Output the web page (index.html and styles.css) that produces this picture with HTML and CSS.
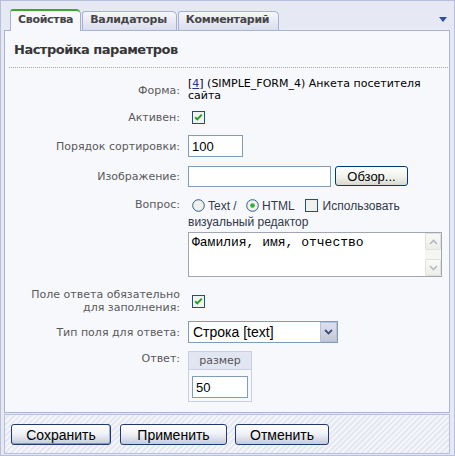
FILE: index.html
```html
<!DOCTYPE html>
<html lang="ru">
<head>
<meta charset="utf-8">
<title>Настройка параметров</title>
<link rel="stylesheet" href="styles.css">
</head>
<body>
<div class="window">
  <div class="tabbar">
    <div class="tabs">
      <div class="tab tab-active">Свойства</div>
      <div class="tab">Валидаторы</div>
      <div class="tab">Комментарий</div>
    </div>
    <span class="menu-arrow"></span>
  </div>

  <div class="panel">
    <h2 class="title">Настройка параметров</h2>
    <div class="form">
      <div class="row row-middle">
        <div class="label">Форма:</div>
        <div class="value value-text">[<a href="#" class="link">4</a>] (SIMPLE_FORM_4) Анкета посетителя сайта</div>
      </div>

      <div class="row row-middle mt-9">
        <div class="label">Активен:</div>
        <div class="value">
          <svg class="check" width="13" height="13" viewBox="0 0 13 13"><rect x="0.5" y="0.5" width="12" height="12" fill="#f3f3ef" stroke="#1c5180"/><path d="M3.2 6.2 L5.3 8.4 L9.8 3.6" stroke="#21a121" stroke-width="2" fill="none"/></svg>
        </div>
      </div>

      <div class="row row-middle mt-11">
        <div class="label">Порядок сортировки:</div>
        <div class="value"><input class="field field-sort" type="text" value="100"></div>
      </div>

      <div class="row row-middle mt-9">
        <div class="label">Изображение:</div>
        <div class="value value-file">
          <input class="field field-file" type="text" value="">
          <button class="browse" type="button">Обзор...</button>
        </div>
      </div>

      <div class="row mt-11">
        <div class="label">Вопрос:</div>
        <div class="value">
          <div class="options">
            <svg class="radio" width="13" height="13" viewBox="0 0 13 13"><circle cx="6.5" cy="6.5" r="5.8" fill="#f1f1ec" stroke="#2c5a8c"/></svg><span class="opt-text">Text /</span>
            <svg class="radio radio-2" width="13" height="13" viewBox="0 0 13 13"><circle cx="6.5" cy="6.5" r="5.8" fill="#f1f1ec" stroke="#2c5a8c"/><circle cx="6.5" cy="6.5" r="2.3" fill="#2fae2f"/></svg><span class="opt-text">HTML</span>
            <svg class="check check-inline" width="13" height="13" viewBox="0 0 13 13"><rect x="0.5" y="0.5" width="12" height="12" fill="#f1f1ec" stroke="#1c5180"/></svg><span class="opt-text">Использовать визуальный редактор</span>
          </div>
          <div class="textarea">
            <textarea class="textarea-input">Фамилия, имя, отчество</textarea>
            <div class="scrollbar">
              <span class="sb-btn"><svg width="9" height="6" viewBox="0 0 9 6"><path d="M1 5 L4.5 1.5 L8 5" stroke="#b4b9c6" stroke-width="1.6" fill="none"/></svg></span>
              <span class="sb-btn"><svg width="9" height="6" viewBox="0 0 9 6"><path d="M1 1 L4.5 4.5 L8 1" stroke="#b4b9c6" stroke-width="1.6" fill="none"/></svg></span>
            </div>
          </div>
        </div>
      </div>

      <div class="row row-middle mt-11">
        <div class="label">Поле ответа обязательно<br>для заполнения:</div>
        <div class="value">
          <svg class="check" width="13" height="13" viewBox="0 0 13 13"><rect x="0.5" y="0.5" width="12" height="12" fill="#f3f3ef" stroke="#1c5180"/><path d="M3.2 6.2 L5.3 8.4 L9.8 3.6" stroke="#21a121" stroke-width="2" fill="none"/></svg>
        </div>
      </div>

      <div class="row row-middle mt-7">
        <div class="label">Тип поля для ответа:</div>
        <div class="value">
          <div class="select">
            <span class="select-value">Строка [text]</span>
            <span class="select-btn"><svg width="9" height="6" viewBox="0 0 9 6"><path d="M1 1 L4.5 4.5 L8 1" stroke="#3f506f" stroke-width="1.8" fill="none"/></svg></span>
          </div>
        </div>
      </div>

      <div class="row mt-8">
        <div class="label label-top">Ответ:</div>
        <div class="value">
          <table class="size-table">
            <tr><th>размер</th></tr>
            <tr><td><input class="field field-size" type="text" value="50"></td></tr>
          </table>
        </div>
      </div>
    </div>
  </div>

  <div class="buttons">
    <button class="btn btn-default btn-save" type="button">Сохранить</button>
    <button class="btn btn-apply" type="button">Применить</button>
    <button class="btn btn-cancel" type="button">Отменить</button>
  </div>
</div>
</body>
</html>
```

FILE: styles.css
```css
* { box-sizing: border-box; }

html, body {
  margin: 0;
  padding: 0;
  background: #ffffff;
}

body {
  font-family: "DejaVu Sans", Verdana, sans-serif;
  font-size: 11px;
  color: #000;
}

.window {
  width: 455px;
  height: 456px;
  border: 1px solid #b7bfdb;
  background: #e6e8f3;
  padding: 0 4px 3px 3px;
}

/* tabs */
.tabbar {
  height: 29px;
  display: flex;
  justify-content: space-between;
  position: relative;
  z-index: 1;
}

.tabs {
  display: flex;
  align-items: flex-end;
  gap: 1px;
  padding-left: 6px;
}

.tab {
  height: 19px;
  padding: 1px 9px 0 7px;
  border: 1px solid #a6b0d2;
  border-bottom: none;
  border-radius: 3px 5px 0 0;
  background: linear-gradient(#f6f7fb, #dadded);
  font-weight: bold;
  font-size: 11px;
  line-height: 13px;
  letter-spacing: -0.3px;
  color: #454545;
  white-space: nowrap;
}

.tab-active {
  height: 22px;
  margin-bottom: -1px;
  padding-top: 2px;
  padding-right: 7px;
  border-top: 2px solid #3aaa2a;
  background: #f7f8fc;
}

.menu-arrow {
  margin-top: 16px;
  margin-right: 3px;
  width: 0;
  height: 0;
  border-top: 5px solid #2d4f9e;
  border-left: 4px solid transparent;
  border-right: 4px solid transparent;
}

/* panel */
.panel {
  border: 1px solid #a9b4d5;
  background: #f7f8fc;
  padding: 0 6px 10px 0;
}

.title {
  margin: 11px -5px 0 4px;
  padding: 0 0 9px 5px;
  font-size: 13px;
  line-height: 16px;
  font-weight: bold;
  letter-spacing: -0.5px;
  color: #363636;
  border-bottom: 1px dotted #a8a8a8;
}

.form {
  margin-top: 10px;
}

.row {
  display: grid;
  grid-template-columns: 175px 1fr;
  column-gap: 8px;
  align-items: start;
}

.row-middle { align-items: center; }

.mt-7 { margin-top: 7px; }
.mt-8 { margin-top: 8px; }
.mt-9 { margin-top: 9px; }
.mt-11 { margin-top: 11px; }

.label {
  text-align: right;
  color: #5a5a5a;
  line-height: 13px;
}

.label-top { padding-top: 1px; }

.value-text {
  line-height: 12px;
  color: #000;
}

.link {
  color: #23349a;
  text-decoration: underline;
}

.value { min-width: 0; }

.check {
  display: block;
  margin-left: 4px;
}

.field {
  display: block;
  height: 22px;
  border: 1px solid #7f9db9;
  background: #fff;
  padding: 0 3px;
  font-family: "Liberation Sans", Arial, sans-serif;
  font-size: 13px;
  color: #000;
  outline: none;
}

.field-sort { width: 55px; }

.value-file {
  display: flex;
  align-items: flex-start;
  gap: 4px;
}

.field-file {
  width: 143px;
  height: 21px;
}

.browse {
  width: 73px;
  height: 20px;
  border: 1px solid #003c74;
  border-radius: 3px;
  background: linear-gradient(#ffffff, #f0f0ea 60%, #d8d8d0);
  font-family: "Liberation Sans", Arial, sans-serif;
  font-size: 13px;
  color: #000;
  padding: 0;
  line-height: 17px;
}

/* question options */
.options {
  font-family: "Liberation Sans", Arial, sans-serif;
  font-size: 12px;
  line-height: 16px;
  color: #333a4a;
}

.radio, .check-inline {
  display: inline-block;
  vertical-align: -2px;
}

.radio { margin: 0 3px 0 4px; }
.radio-2 { margin-left: 6px; }
.check-inline { margin: 0 5px 0 7px; }

.textarea {
  margin-top: 2px;
  width: 254px;
  height: 45px;
  border: 1px solid #a0a7b3;
  background: #fff;
  display: flex;
}

.textarea-input {
  flex: 1;
  border: none;
  resize: none;
  outline: none;
  overflow: hidden;
  padding: 2px 3px;
  margin: 0;
  font-family: "Liberation Mono", "Courier New", monospace;
  font-size: 13px;
  line-height: 15px;
  color: #000;
  background: #fff;
}

.scrollbar {
  width: 16px;
  background: #f5f5f1;
  display: flex;
  flex-direction: column;
  justify-content: space-between;
}

.sb-btn {
  height: 17px;
  border: 1px solid #e0e1dc;
  border-radius: 2px;
  background: linear-gradient(#f9f9f6, #eeeee8);
  display: flex;
  align-items: center;
  justify-content: center;
}

/* select */
.select {
  width: 150px;
  height: 22px;
  border: 1px solid #7f9db9;
  background: #fff;
  display: flex;
  align-items: center;
  justify-content: space-between;
  font-family: "Liberation Sans", Arial, sans-serif;
  font-size: 14px;
  color: #000;
}

.select-value { padding-left: 4px; }

.select-btn {
  width: 17px;
  height: 20px;
  border: 1px solid #b8c1da;
  background: linear-gradient(#dde1ee, #c3c8db);
  display: flex;
  align-items: center;
  justify-content: center;
}

/* size table */
.size-table {
  border-collapse: collapse;
  width: 64px;
  border: 1px solid #c9cee3;
}

.size-table th {
  height: 18px;
  padding: 0;
  background: #e2e5f2;
  border-bottom: 1px solid #c9cee3;
  font-weight: normal;
  color: #555;
  font-size: 11px;
  text-align: center;
}

.size-table td {
  padding: 6px 3px 3px 3px;
}

.field-size { width: 56px; }

/* buttons */
.buttons {
  margin-top: 1px;
  height: 40px;
  border: 1px solid #b7bfdb;
  background: repeating-linear-gradient(135deg, #f4f5fa 0 2px, #e6e8f1 2px 4px);
  padding: 9px 0 0 6px;
  display: flex;
  align-items: flex-start;
}

.btn {
  height: 21px;
  border: 1px solid #1f3a6c;
  border-radius: 3px;
  background: linear-gradient(#ffffff, #f1f2f7 45%, #c6cadc);
  font-family: "Liberation Sans", Arial, sans-serif;
  font-size: 14px;
  line-height: 18px;
  color: #000;
  padding: 0;
}

.btn-default {
  box-shadow: inset 0 -1px 0 #7b9ad6, inset -1px 0 0 #9bb3e2;
}

.btn-save { width: 100px; }
.btn-apply { width: 107px; margin-left: 9px; }
.btn-cancel { width: 94px; margin-left: 8px; }
```
